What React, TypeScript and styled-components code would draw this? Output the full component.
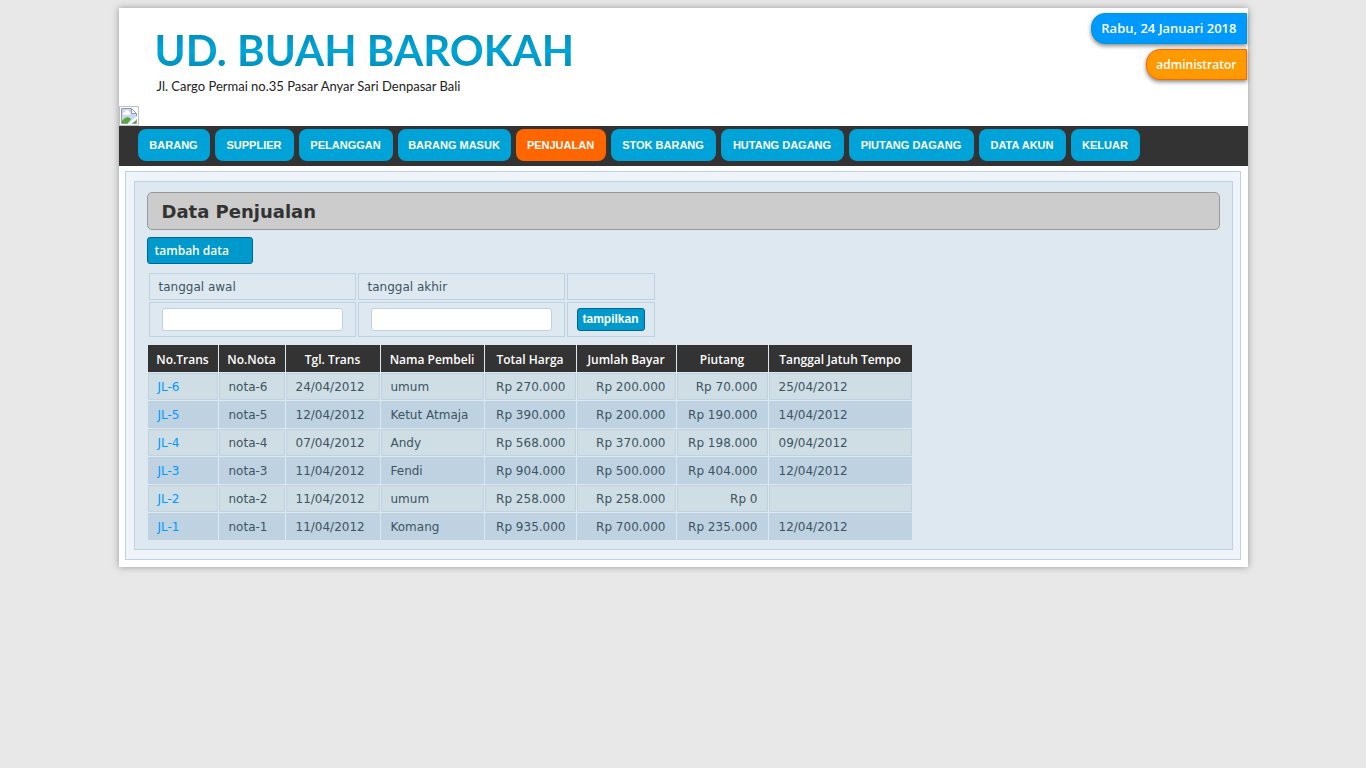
import React from 'react';
import styled, { createGlobalStyle } from 'styled-components';

const GlobalStyle = createGlobalStyle`
  *, *::before, *::after { box-sizing: border-box; }
  body {
    margin: 0;
    padding: 8px;
    background: #e8e8e8;
    color: #3c5561;
    font: 12px/17px 'DejaVu Sans', Verdana, sans-serif;
  }
`;

const Page = styled.div`
  max-width: 1129px;
  margin: 0 auto;
  padding-bottom: 7px;
  background: #fff;
  box-shadow: 0 0 7px #999;
`;

const Header = styled.header`
  display: flex;
  justify-content: space-between;
  align-items: flex-start;
  height: 98px;
`;

const Brand = styled.div`
  padding: 16px 0 0 36px;
`;

const BrandName = styled.h1`
  margin: 0;
  font: bold 42px/53px Lato, Calibri, sans-serif;
  color: transparent;
  background: linear-gradient(#0091bd 20%, #00a5d8 50%, #0091bd 80%);
  background-clip: text;
  -webkit-background-clip: text;
`;

const Address = styled.p`
  margin: 0;
  padding-left: 2px;
  font: 13px/18px Lato, Calibri, sans-serif;
  color: #222;
`;

const Badges = styled.div`
  display: flex;
  flex-direction: column;
  align-items: flex-end;
  gap: 5px;
  padding: 5px 1px 0 0;
`;

const Badge = styled.div<{ $fill: string; $edge: string; $size: number }>`
  height: 31px;
  padding: 0 9px;
  border: 1px solid ${p => p.$edge};
  border-radius: 14px 0 0 14px;
  background: ${p => p.$fill};
  color: #fff;
  font: 600 ${p => p.$size}px/29px 'Open Sans', Tahoma, sans-serif;
  box-shadow: 0 2px 4px #888;
`;

const MissingPicture = styled.svg`
  display: block;
  width: 20px;
  height: 20px;
`;

const Nav = styled.nav`
  display: flex;
  flex-wrap: wrap;
  gap: 5px;
  padding: 3px 19px 5px;
  background: #333;
`;

const NavLink = styled.a<{ $active: boolean; $width: number }>`
  width: ${p => p.$width}px;
  border-radius: 8px;
  background: ${p => (p.$active ? '#ff6600' : '#00a3d7')};
  color: #fff;
  font: bold 11px/32px 'Liberation Sans', Arial, sans-serif;
  text-align: center;
  text-decoration: none;
  white-space: nowrap;
`;

const Frame = styled.main`
  margin: 5px 7px 0 6px;
  padding: 9px 7px 9px 8px;
  border: 1px solid #bed2e2;
  background: #eef4f9;
`;

const Panel = styled.section`
  padding: 10px 12px 8px;
  border: 1px solid #bed2e2;
  background: #dee8f0;
`;

const Title = styled.h2`
  height: 38px;
  margin: 0 0 7px;
  padding: 0 14px;
  border: 1px solid #999;
  border-radius: 5px;
  background: #ccc;
  color: #333;
  font-size: 18px;
  line-height: 38px;
`;

const AddLink = styled.a`
  display: block;
  width: 106px;
  margin-bottom: 7px;
  padding: 0 7px;
  border: 1px solid #006699;
  border-radius: 3px;
  background: #0099cc;
  color: #fff;
  font: 600 12px/25px 'Open Sans', Tahoma, sans-serif;
  text-decoration: none;
`;

const FilterTable = styled.table`
  border-spacing: 2px;
  margin-bottom: 5px;
`;

const FilterCell = styled.td`
  padding: 5px 9px;
  border: 1px solid #bed2e2;
  &:nth-child(-n + 2) { width: 207px; }
  &:last-child { width: 88px; }
`;

const FilterLabel = styled.label`
  display: block;
  height: 15px;
`;

const DateInput = styled.input`
  display: block;
  width: 181px;
  height: 23px;
  margin: 0 3px;
  padding: 0 4px;
  border: 1px solid #bed2e2;
  border-radius: 3px;
  background: #fff;
  font: inherit;
`;

const ShowButton = styled.button`
  display: block;
  width: 68px;
  height: 23px;
  padding: 0;
  border: 1px solid #006699;
  border-radius: 3px;
  background: #0099cc;
  color: #fff;
  font: bold 12px/21px 'Liberation Sans', Arial, sans-serif;
`;

const SalesTable = styled.table`
  table-layout: fixed;
  width: 766px;
  border-spacing: 1px;
`;

const HeadCell = styled.th<{ $width: number }>`
  width: ${p => p.$width}px;
  height: 27px;
  padding: 2px 0 0;
  background: #333;
  color: #fff;
  font: 600 12px/17px 'Open Sans', Tahoma, sans-serif;
  white-space: nowrap;
`;

const Row = styled.tr`
  background: #cfdde5;
  &:nth-child(even) { background: #bed2e2; }
`;

const Cell = styled.td<{ $right?: boolean }>`
  height: 27px;
  padding: 2px 9px 0;
  border: 1px solid #bed2e2;
  text-align: ${p => (p.$right ? 'right' : 'left')};
  white-space: nowrap;
`;

const TransLink = styled.a`
  color: #0099ff;
  text-decoration: none;
`;

const menu: [string, number][] = [
  ['BARANG', 72], ['SUPPLIER', 79], ['PELANGGAN', 94], ['BARANG MASUK', 113], ['PENJUALAN', 90],
  ['STOK BARANG', 105], ['HUTANG DAGANG', 123], ['PIUTANG DAGANG', 125], ['DATA AKUN', 87], ['KELUAR', 69],
];

const columns: [string, number][] = [
  ['No.Trans', 70], ['No.Nota', 66], ['Tgl. Trans', 94], ['Nama Pembeli', 103],
  ['Total Harga', 91], ['Jumlah Bayar', 99], ['Piutang', 91], ['Tanggal Jatuh Tempo', 143],
];

const sales = [
  ['JL-6', 'nota-6', '24/04/2012', 'umum', 'Rp 270.000', 'Rp 200.000', 'Rp 70.000', '25/04/2012'],
  ['JL-5', 'nota-5', '12/04/2012', 'Ketut Atmaja', 'Rp 390.000', 'Rp 200.000', 'Rp 190.000', '14/04/2012'],
  ['JL-4', 'nota-4', '07/04/2012', 'Andy', 'Rp 568.000', 'Rp 370.000', 'Rp 198.000', '09/04/2012'],
  ['JL-3', 'nota-3', '11/04/2012', 'Fendi', 'Rp 904.000', 'Rp 500.000', 'Rp 404.000', '12/04/2012'],
  ['JL-2', 'nota-2', '11/04/2012', 'umum', 'Rp 258.000', 'Rp 258.000', 'Rp 0', ''],
  ['JL-1', 'nota-1', '11/04/2012', 'Komang', 'Rp 935.000', 'Rp 700.000', 'Rp 235.000', '12/04/2012'],
];

export default function App() {
  return (
    <>
      <GlobalStyle />
      <Page>
        <Header>
          <Brand>
            <BrandName>UD. BUAH BAROKAH</BrandName>
            <Address>Jl. Cargo Permai no.35 Pasar Anyar Sari Denpasar Bali</Address>
          </Brand>
          <Badges>
            <Badge $fill="#0099ff" $edge="#0099cc" $size={13}>Rabu, 24 Januari 2018</Badge>
            <Badge $fill="#ff9900" $edge="#ff6600" $size={12}>administrator</Badge>
          </Badges>
        </Header>
        <MissingPicture viewBox="0 0 20 20" aria-hidden="true">
          <path d="M.5.5h19v19H.5z" fill="#fff" stroke="#c0c0c0" />
          <path d="M2.500 2.500h10l5 5v10h-15z" fill="#c6d8f5" stroke="#999" />
          <path d="M4 8a2 2 0 0 1 2-2 2 2 0 0 1 4 0 1.500 1.500 0 0 1 0 3H4z" fill="#fff" />
          <path d="M3 17v-2c3-4 6-5 9-2l-3 4z" fill="#54a836" />
          <path d="M8 18.500l10.500-9v3L12 18.500z" fill="#fff" />
          <path d="M13.500 17l3.500-2.500V17z" fill="#54a836" />
          <path d="M12.500 2.500v5h5z" fill="#fff" stroke="#999" />
        </MissingPicture>
        <Nav>
          {menu.map(([name, width]) => (
            <NavLink key={name} href="#" $width={width} $active={name === 'PENJUALAN'}>{name}</NavLink>
          ))}
        </Nav>
        <Frame>
          <Panel>
            <Title>Data Penjualan</Title>
            <AddLink href="#">tambah data</AddLink>
            <FilterTable>
              <tbody>
                <tr>
                  <FilterCell><FilterLabel htmlFor="awal">tanggal awal</FilterLabel></FilterCell>
                  <FilterCell><FilterLabel htmlFor="akhir">tanggal akhir</FilterLabel></FilterCell>
                  <FilterCell />
                </tr>
                <tr>
                  <FilterCell><DateInput id="awal" type="text" /></FilterCell>
                  <FilterCell><DateInput id="akhir" type="text" /></FilterCell>
                  <FilterCell><ShowButton type="button">tampilkan</ShowButton></FilterCell>
                </tr>
              </tbody>
            </FilterTable>
            <SalesTable>
              <thead>
                <tr>
                  {columns.map(([name, width]) => (
                    <HeadCell key={name} $width={width}>{name}</HeadCell>
                  ))}
                </tr>
              </thead>
              <tbody>
                {sales.map(row => (
                  <Row key={row[0]}>
                    {row.map((value, i) => (
                      <Cell key={i} $right={i >= 4 && i <= 6}>
                        {i === 0 ? <TransLink href="#">{value}</TransLink> : value}
                      </Cell>
                    ))}
                  </Row>
                ))}
              </tbody>
            </SalesTable>
          </Panel>
        </Frame>
      </Page>
    </>
  );
}
